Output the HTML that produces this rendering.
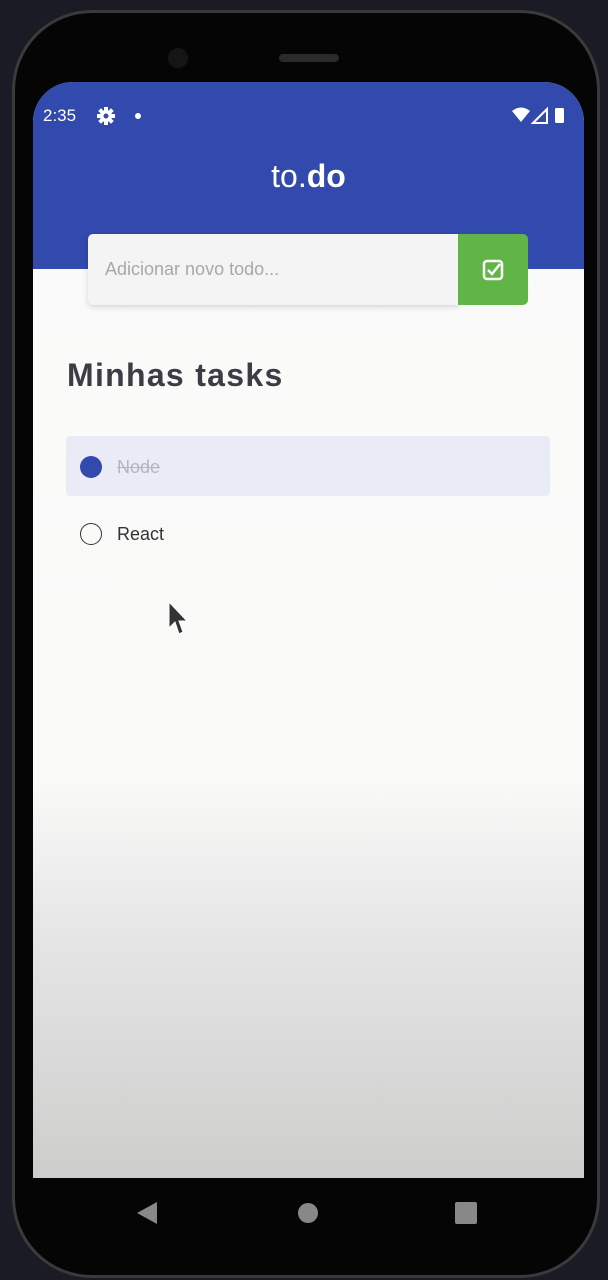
<!DOCTYPE html>
<html><head><meta charset="utf-8"><style>
*{margin:0;padding:0;box-sizing:border-box}
body{width:608px;height:1280px;background:#1b1b26;position:relative;overflow:hidden;font-family:"Liberation Sans",sans-serif}
.phone{position:absolute;left:12px;top:10px;width:588px;height:1268px;background:#050505;border-radius:80px;border:3px solid #3a3a3a}
.screen{position:absolute;left:33px;top:82px;width:551px;height:1096px;border-radius:40px 40px 0 0;overflow:hidden;background:linear-gradient(#fafafa 0,#f9f9f8 700px,#e6e6e6 850px,#cdcdcc 1096px)}
.hdr{position:absolute;left:0;top:0;width:100%;height:187px;background:#3249ad}
.sb{position:absolute;top:24px;color:#fff;font-size:17px}
.logo{position:absolute;top:76px;width:100%;text-align:center;color:#fff;font-size:32px}
.inp{position:absolute;left:55px;top:152px;width:371px;height:71px;background:#f4f4f4;border-radius:5px 0 0 5px;box-shadow:0 2px 6px rgba(0,0,0,.15);color:#a8a8a8;font-size:18px;line-height:71px;padding-left:17px}
.btn{position:absolute;left:425px;top:152px;width:70px;height:71px;background:#60b546;border-radius:0 5px 5px 0}
h1{position:absolute;left:34px;top:275px;font-size:32px;color:#3c3c44;font-weight:bold;letter-spacing:1.3px}
.task1{position:absolute;left:33px;top:354px;width:484px;height:60px;background:#e9ebf6;border-radius:4px}
.t{position:absolute;font-size:18px}
</style></head><body>
<div class="phone"></div>
<div style="position:absolute;left:168px;top:48px;width:20px;height:20px;border-radius:50%;background:#151515"></div>
<div style="position:absolute;left:279px;top:54px;width:60px;height:8px;border-radius:4px;background:#2a2a2a"></div>
<div class="screen">
 <div class="hdr">
  <div class="sb" style="left:10px">2:35</div>
  <svg style="position:absolute;left:64px;top:25px" width="18" height="18" viewBox="0 0 18 18"><g fill="#fff"><circle cx="9" cy="9" r="6"/><rect x="7" y="0" width="4" height="18"/><rect x="0" y="7" width="18" height="4"/><rect x="7" y="0" width="4" height="18" transform="rotate(45 9 9)"/><rect x="7" y="0" width="4" height="18" transform="rotate(-45 9 9)"/></g><circle cx="9" cy="9" r="2.5" fill="#3249ad"/></svg>
  <div style="position:absolute;left:102px;top:31px;width:6px;height:6px;border-radius:50%;background:#fff"></div>
  <svg style="position:absolute;left:478px;top:24px" width="60" height="20"><path d="M1 5 Q10-2 19 5 L10 16Z" fill="#fff"/><path d="M22 17 L36 3 L36 17Z" fill="none" stroke="#fff" stroke-width="2"/><rect x="44" y="2" width="9" height="15" rx="1.5" fill="#fff"/></svg>
  <div class="logo">to.<b>do</b></div>
 </div>
 <div class="inp">Adicionar novo todo...</div>
 <div class="btn"><svg style="position:absolute;left:24px;top:25px" width="22" height="22"><rect x="2" y="2" width="18" height="18" rx="3" fill="none" stroke="#fff" stroke-width="2.5"/><path d="M6 11 L10 15 L18 5" fill="none" stroke="#fff" stroke-width="2.5"/></svg></div>
 <h1>Minhas tasks</h1>
 <div class="task1"></div>
 <div style="position:absolute;left:47px;top:374px;width:22px;height:22px;border-radius:50%;background:#3249ad"></div>
 <div class="t" style="left:84px;top:375px;color:#b2b5c4;text-decoration:line-through">Node</div>
 <div style="position:absolute;left:47px;top:441px;width:22px;height:22px;border-radius:50%;border:1.5px solid #333"></div>
 <div class="t" style="left:84px;top:442px;color:#333">React</div>
 <svg style="position:absolute;left:134px;top:518px" width="26" height="40"><path d="M2 2 L2 28 L8 22 L12 34 L16 32 L12 21 L20 21Z" fill="#333" stroke="#fff" stroke-width="1"/></svg>
</div>
<svg style="position:absolute;left:0;top:1195px" width="608" height="40">
 <path d="M137 18 L157 7 L157 29Z" fill="#888"/>
 <circle cx="308" cy="18" r="10" fill="#888"/>
 <rect x="455" y="7" width="22" height="22" rx="2" fill="#888"/>
</svg>
</body></html>
